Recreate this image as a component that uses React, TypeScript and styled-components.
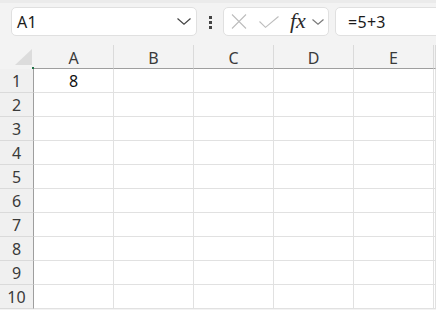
import React from "react";
import styled, { createGlobalStyle } from "styled-components";

const Global = createGlobalStyle`
  html, body { margin: 0; padding: 0; background: #f3f3f3; overflow: hidden; }
  body { font-family: "Noto Sans", "Open Sans", sans-serif; }
`;

const Page = styled.div`
  width: 436px;
  height: 310px;
  overflow: hidden;
  background: #f3f3f3;
`;

const Toolbar = styled.div`
  box-sizing: border-box;
  height: 45px;
  border-top: 3px solid #ebebeb;
  padding: 4px 0 0 11px;
  display: flex;
  align-items: flex-start;
`;

const Box = styled.div<{ $w?: number; $grow?: boolean; $ml?: number }>`
  box-sizing: border-box;
  height: 29px;
  ${(p) => (p.$w ? `width: ${p.$w}px; flex: none;` : "")}
  ${(p) => (p.$grow ? "flex: 1; margin-right: -10px;" : "")}
  margin-left: ${(p) => p.$ml ?? 0}px;
  background: #fff;
  border: 1px solid #e0e0e0;
  border-radius: 5px;
  display: flex;
  align-items: center;
`;

const BoxText = styled.span<{ $pl: number }>`
  padding-left: ${(p) => p.$pl}px;
  font-size: 16px;
  color: #1b1b1b;
  flex: 1;
  line-height: 1;
  letter-spacing: 0.3px;
`;

const Dots = styled.div`
  margin: 9px 0 0 12px;
  width: 3px;
  display: flex;
  flex-direction: column;
  gap: 2px;
  & > i {
    display: block;
    width: 3px;
    height: 3px;
    background: #444;
  }
`;

const IconSlot = styled.span<{ $ml: number }>`
  margin-left: ${(p) => p.$ml}px;
  display: flex;
  align-items: center;
`;

const Fx = styled.span`
  margin-left: 11px;
  font-family: "Liberation Serif", "DejaVu Serif", serif;
  font-style: italic;
  font-size: 22px;
  color: #2a2a2a;
  line-height: 1;
  letter-spacing: 0px;
  margin-top: -2px;
`;

const Sheet = styled.div`
  display: grid;
  grid-template-columns: 34px repeat(5, 80px) 1fr;
  grid-auto-rows: 24px;
`;

const Corner = styled.div`
  box-sizing: border-box;
  height: 24px;
  border-bottom: 1px solid #f3f3f3;
  display: flex;
  align-items: flex-end;
  justify-content: flex-end;
  padding: 0 2px 3px 0;
  position: relative;
  &::after {
    content: "";
    position: absolute;
    right: 0;
    bottom: -1px;
    width: 2px;
    height: 2px;
    background: #1e7145;
  }
`;

const Triangle = styled.div`
  width: 17px;
  height: 16px;
  background: #dcdcdc;
  clip-path: polygon(100% 0, 100% 100%, 0 100%);
`;

const ColHead = styled.div`
  box-sizing: border-box;
  border-right: 1px solid #dadada;
  border-bottom: 1px solid #9e9e9e;
  display: flex;
  align-items: center;
  justify-content: center;
  font-size: 16px;
  color: #3a3a3a;
  padding-top: 2px;
`;

const RowHead = styled.div`
  box-sizing: border-box;
  background: #f0f0f0;
  border-right: 1px solid #9e9e9e;
  border-bottom: 1px solid #dadada;
  display: flex;
  align-items: center;
  justify-content: center;
  font-size: 16px;
  color: #3a3a3a;
  padding-top: 1px;
`;

const Cell = styled.div`
  box-sizing: border-box;
  background: #fff;
  border-right: 1px solid #e1e1e1;
  border-bottom: 1px solid #e1e1e1;
  display: flex;
  align-items: center;
  justify-content: center;
  font-size: 16px;
  color: #111;
  padding-top: 1px;
`;

const Chevron = ({ w, h, color }: { w: number; h: number; color: string }) => (
  <svg width={w} height={h} viewBox={`0 0 ${w} ${h}`} fill="none">
    <polyline
      points={`0.5,0.5 ${w / 2},${h - 0.8} ${w - 0.5},0.5`}
      stroke={color}
      strokeWidth="1.2"
    />
  </svg>
);

const cols = ["A", "B", "C", "D", "E", ""];
const rows = [1, 2, 3, 4, 5, 6, 7, 8, 9, 10];
const data: Record<string, string> = { A1: "8" };

export default function App() {
  return (
    <Page>
      <Global />
      <Toolbar>
        <Box $w={186}>
          <BoxText $pl={5}>A1</BoxText>
          <IconSlot $ml={0} style={{ marginRight: 5 }}>
            <Chevron w={14} h={7} color="#444" />
          </IconSlot>
        </Box>
        <Dots>
          <i />
          <i />
          <i />
        </Dots>
        <Box $w={106} $ml={11}>
          <IconSlot $ml={7}>
            <svg width="16" height="15" viewBox="0 0 16 15">
              <path d="M1 0.5 L15 14.5 M15 0.5 L1 14.5" stroke="#bdbdbd" strokeWidth="1.1" />
            </svg>
          </IconSlot>
          <IconSlot $ml={12}>
            <svg width="20" height="12" viewBox="0 0 20 12">
              <path d="M0.5 5.5 L6.5 11.3 L19.5 0.5" stroke="#bdbdbd" strokeWidth="1.1" fill="none" />
            </svg>
          </IconSlot>
          <Fx>fx</Fx>
          <IconSlot $ml={6}>
            <Chevron w={12} h={6} color="#7a7a7a" />
          </IconSlot>
        </Box>
        <Box $grow $ml={6}>
          <BoxText $pl={12}>=5+3</BoxText>
        </Box>
      </Toolbar>
      <Sheet>
        <Corner>
          <Triangle />
        </Corner>
        {cols.map((c, i) => (
          <ColHead key={i}>{c}</ColHead>
        ))}
        {rows.map((r) => (
          <React.Fragment key={r}>
            <RowHead>{r}</RowHead>
            {cols.map((c, i) => (
              <Cell key={i}>{c ? data[c + r] ?? "" : ""}</Cell>
            ))}
          </React.Fragment>
        ))}
      </Sheet>
    </Page>
  );
}
